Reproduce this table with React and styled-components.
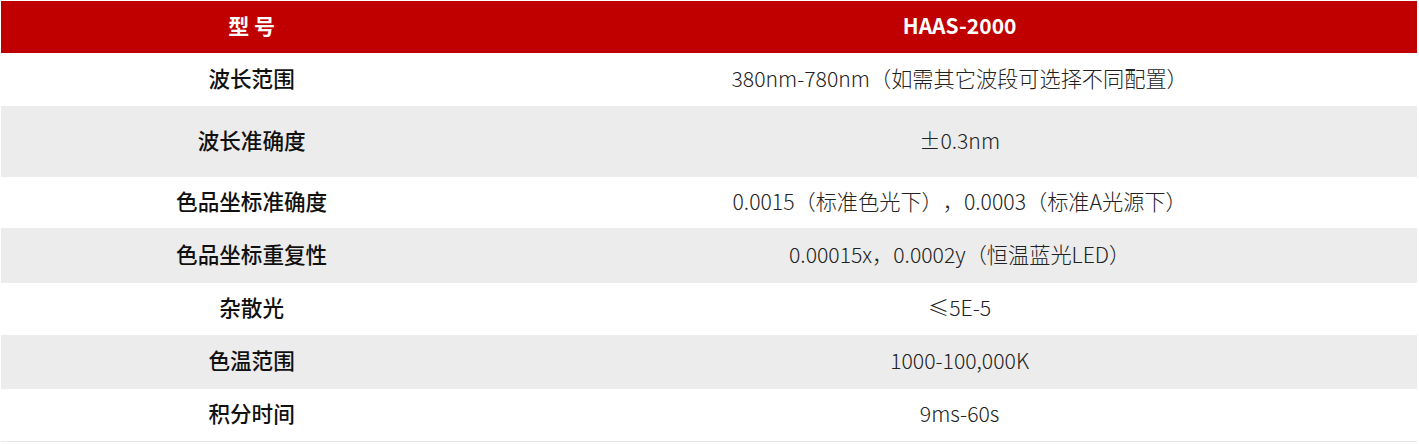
import React from "react";
import styled, { createGlobalStyle } from "styled-components";

const GlobalStyle = createGlobalStyle`
  body {
    margin: 0;
    background: #fff;
    font-family: "Noto Sans CJK SC", "Noto Sans", sans-serif;
    text-spacing-trim: space-all;
  }
`;

const Wrap = styled.div`
  padding: 1px 2px 0 1px;
`;

const Table = styled.table`
  width: 100%;
  border-collapse: collapse;
  table-layout: fixed;
  border-bottom: 1px solid #e6e6e6;
`;

const HeadCell = styled.th`
  background: #c00000;
  color: #fff;
  height: 48px;
  padding: 0 0 4px;
  font-size: 21px;
  font-weight: 700;
  text-align: center;
  width: ${(p) => p.$w || "auto"};
`;

const Row = styled.tr`
  background: ${(p) => (p.$alt ? "#ececec" : "#fff")};
  height: ${(p) => p.$h}px;
`;

const Label = styled.td`
  padding: 0 0 5px;
  text-align: center;
  font-size: 21.6px;
  font-weight: 500;
  color: #111;
`;

const Value = styled.td`
  padding: 0 0 5px;
  text-align: center;
  font-size: 21.2px;
  font-weight: 300;
  color: #222;
`;

const rows = [
  ["波长范围", "380nm-780nm（如需其它波段可选择不同配置）", 53],
  ["波长准确度", "±0.3nm", 71],
  ["色品坐标准确度", "0.0015（标准色光下），0.0003（标准A光源下）", 51],
  ["色品坐标重复性", "0.00015x，0.0002y（恒温蓝光LED）", 55],
  ["杂散光", "≤5E-5", 52],
  ["色温范围", "1000-100,000K", 54],
  ["积分时间", "9ms-60s", 52],
];

export default function App() {
  return (
    <>
      <GlobalStyle />
      <Wrap>
        <Table>
          <thead>
            <tr>
              <HeadCell $w="35.4%">型 号</HeadCell>
              <HeadCell>HAAS-2000</HeadCell>
            </tr>
          </thead>
          <tbody>
            {rows.map(([label, value, h], i) => (
              <Row key={label} $alt={i % 2 === 1} $h={h}>
                <Label>{label}</Label>
                <Value>{value}</Value>
              </Row>
            ))}
          </tbody>
        </Table>
      </Wrap>
    </>
  );
}
